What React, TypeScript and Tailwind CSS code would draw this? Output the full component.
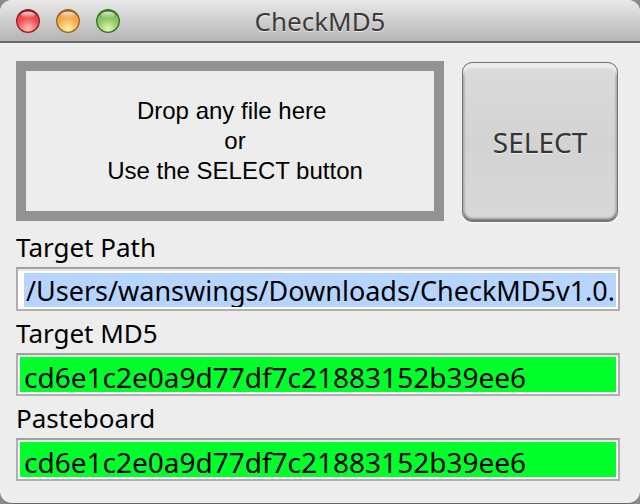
import { useId } from "react";

const sans = "font-['Noto_Sans','Open_Sans',sans-serif]";

type LightProps = { label: string; edge: string; body: string; glow: string };

function TrafficLight({ label, edge, body, glow }: LightProps) {
  const id = useId();
  return (
    <button type="button" aria-label={label} className="block size-6">
      <svg viewBox="0 0 24 24" className="size-6" aria-hidden="true">
        <defs>
          <linearGradient id={`${id}b`} x1="0" y1="0" x2="0" y2="1">
            <stop offset="0" stopColor={edge} />
            <stop offset="0.35" stopColor={body} />
            <stop offset="1" stopColor={body} />
          </linearGradient>
          <radialGradient id={`${id}g`} cx="0.5" cy="0.88" r="0.55">
            <stop offset="0" stopColor={glow} />
            <stop offset="1" stopColor={glow} stopOpacity="0" />
          </radialGradient>
          <linearGradient id={`${id}s`} x1="0" y1="0" x2="0" y2="1">
            <stop offset="0" stopColor="#fff" stopOpacity="0.85" />
            <stop offset="1" stopColor="#fff" stopOpacity="0.05" />
          </linearGradient>
        </defs>
        <circle cx="12" cy="12.8" r="11.2" fill="#fff" opacity="0.45" />
        <circle cx="12" cy="12" r="11.3" fill={`url(#${id}b)`} stroke={edge} strokeWidth="1.3" />
        <circle cx="12" cy="12" r="10.5" fill={`url(#${id}g)`} />
        <ellipse cx="12" cy="6" rx="7" ry="3.2" fill={`url(#${id}s)`} />
      </svg>
    </button>
  );
}

type FieldProps = { label: string; value: string; selected?: boolean };

function Field({ label, value, selected = false }: FieldProps) {
  const id = useId();
  return (
    <div className="flex flex-col">
      <label htmlFor={id} className="flex h-[42px] items-center pt-0.5 text-[26px] leading-8">
        {label}
      </label>
      <div
        className={`flex border-2 border-[#b0b0b0] border-t-[#a0a0a0] bg-white shadow-[inset_0_2px_1px_#e6e6e6] ${
          selected ? "h-11 pt-1 pr-0.5 pb-0.5 pl-1.5" : "h-[43px] p-0.5"
        }`}
      >
        <input
          id={id}
          readOnly
          defaultValue={value}
          className={`w-full min-w-0 leading-8 text-black outline-none ${
            selected ? "bg-[#b5d5ff] pt-0.5 pl-0.5 text-[27px]" : "bg-[#00ff2b] pt-1 pl-1 text-[28px]"
          }`}
        />
      </div>
    </div>
  );
}

export default function App() {
  return (
    <div className="bg-[#8a8a8a]">
      <div className={`flex min-h-screen flex-col overflow-hidden rounded-xl border-b border-[#666] bg-[#ededed] text-black ${sans}`}>
        <header className="grid h-[43px] grid-cols-[1fr_auto_1fr] items-center border-b-2 border-[#686868] bg-linear-to-b from-[#e9e9e9] to-[#b5b5b5] px-4">
          <div className="flex gap-4">
            <TrafficLight label="Close" edge="#8f1c22" body="#f4474a" glow="#ffc4c0" />
            <TrafficLight label="Minimize" edge="#94601c" body="#f3aa45" glow="#fff0a8" />
            <TrafficLight label="Zoom" edge="#376f24" body="#84c45f" glow="#dcf8b4" />
          </div>
          <h1 className="text-[26px] leading-8 text-[#3b3b3b] [text-shadow:0_1px_1px_#eee]">CheckMD5</h1>
        </header>
        <main className="flex flex-col pt-[18px] pr-5 pb-5 pl-4">
          <div className="flex gap-[18px] pr-0.5 pb-[3px]">
            <div className="flex h-40 flex-1 items-center justify-center border-10 border-[#929292] pl-2.5">
              <p className="text-center font-['Liberation_Sans',Arial,sans-serif] text-2xl leading-[30px] whitespace-pre">
                {"Drop any file here \nor\nUse the SELECT button"}
              </p>
            </div>
            <button
              type="button"
              className="mt-px h-40 w-39 rounded-[10px] border border-[#747474] bg-linear-to-b from-[#dbdbdb] via-[#d3d3d3] to-[#d8d8d8] text-[28px] text-[#353535] shadow-[inset_0_5px_2px_#ededed,inset_0_-2px_3px_#666,inset_1px_0_2px_#aaa,inset_-1px_0_2px_#aaa,0_1px_1px_#fff] [text-shadow:0_1px_1px_#eee]"
            >
              SELECT
            </button>
          </div>
          <Field label="Target Path" value="/Users/wanswings/Downloads/CheckMD5v1.0." selected />
          <Field label="Target MD5" value="cd6e1c2e0a9d77df7c21883152b39ee6" />
          <Field label="Pasteboard" value="cd6e1c2e0a9d77df7c21883152b39ee6" />
        </main>
      </div>
    </div>
  );
}
